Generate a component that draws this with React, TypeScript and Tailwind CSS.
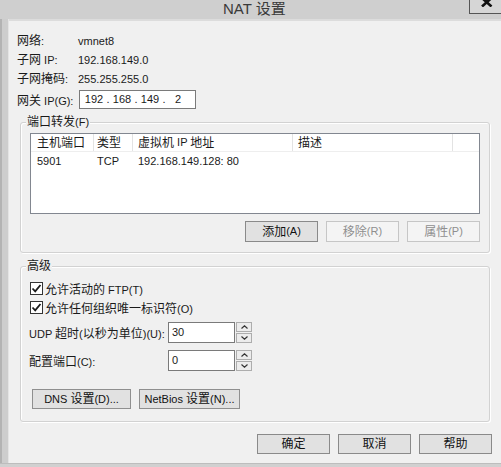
import React from "react";

const CJK_RUN = /([\u2E80-\u9FFF\uFF00-\uFFEF]+)/;
const CJK_CHAR = /[\u2E80-\u9FFF\uFF00-\uFFEF]/;

// Mixed-script text: CJK at 12px, Latin at 11px, like the system UI font pairing.
function T({ s }: { s: string }) {
  const parts = s.split(CJK_RUN).filter((p) => p.length > 0);
  return (
    <>
      {parts.map((p, i) =>
        CJK_CHAR.test(p) ? (
          <span key={i} className="text-[12px]">
            {p}
          </span>
        ) : (
          <span key={i} className="text-[11px]">
            {p}
          </span>
        )
      )}
    </>
  );
}

function Btn({
  label,
  className,
  disabled,
}: {
  label: string;
  className: string;
  disabled?: boolean;
}) {
  return (
    <div
      className={
        "flex items-center justify-center whitespace-pre leading-none " +
        (disabled
          ? "border border-[#c6c6c6] bg-[#f4f4f4] text-[#8f8f8f] "
          : "border border-[#8a8a8a] bg-[#e1e1e1] text-[#111] ") +
        className
      }
    >
      <T s={label} />
    </div>
  );
}

function GroupBox({
  title,
  className,
  children,
}: {
  title: string;
  className: string;
  children: React.ReactNode;
}) {
  return (
    <div
      className={
        "relative rounded-[3px] border border-[#d2d2d2] shadow-[inset_1px_1px_0_#ffffff,1px_1px_0_#ffffff] " +
        className
      }
    >
      <div className="absolute left-[5px] top-[-8px] bg-[#f0f0f0] px-[1px] h-[14px] flex items-center leading-none whitespace-pre">
        <T s={title} />
      </div>
      {children}
    </div>
  );
}

function CheckBox({ label }: { label: string }) {
  return (
    <div className="flex items-center h-[13px] ml-[1px]">
      <div className="w-[13px] h-[13px] border border-[#333333] bg-white flex items-center justify-center">
        <svg width="11" height="11" viewBox="0 0 11 11">
          <path d="M1.5 5.5 L4.2 8.3 L9.5 2" fill="none" stroke="#1a1a1a" strokeWidth="1.8" />
        </svg>
      </div>
      <div className="ml-[2px] leading-none whitespace-pre">
        <T s={label} />
      </div>
    </div>
  );
}

function Spin({ value }: { value: string }) {
  return (
    <div className="flex h-[21px]">
      <div className="w-[67px] h-full border border-[#7a7a7a] bg-white flex items-center pl-[3px] leading-none">
        <T s={value} />
      </div>
      <div className="w-[16px] h-full ml-[1px] flex flex-col">
        <div className="h-[10px] border border-[#adadad] bg-[#ececec] flex items-center justify-center">
          <svg width="7" height="4" viewBox="0 0 7 4">
            <path d="M0.5 3.5 L3.5 0.8 L6.5 3.5" fill="none" stroke="#333" strokeWidth="1.2" />
          </svg>
        </div>
        <div className="h-[10px] mt-[1px] border border-[#adadad] bg-[#ececec] flex items-center justify-center">
          <svg width="7" height="4" viewBox="0 0 7 4">
            <path d="M0.5 0.5 L3.5 3.2 L6.5 0.5" fill="none" stroke="#333" strokeWidth="1.2" />
          </svg>
        </div>
      </div>
    </div>
  );
}

function InfoRow({ label, value }: { label: string; value: string }) {
  return (
    <div className="flex items-center h-[19px] leading-none">
      <div className="w-[61px] whitespace-pre">
        <T s={label} />
      </div>
      <div className="whitespace-pre">
        <T s={value} />
      </div>
    </div>
  );
}

export default function App() {
  const octets = ["192", "168", "149", "2"];
  return (
    <div
      className="relative w-[501px] h-[467px] overflow-hidden bg-[#f0f0f0] text-[#1a1a1a] flex flex-col"
      style={{ fontFamily: '"Liberation Sans", "Noto Sans CJK SC", sans-serif' }}
    >
      {/* title bar */}
      <div className="h-[19px] shrink-0 bg-[#cfcfcf] flex items-start pl-[223px] pt-[1px]">
        <span className="text-[15px] leading-[16px] text-[#3a3a3a] whitespace-pre">NAT 设置</span>
      </div>
      <div className="absolute right-0 top-0 w-[32px] h-[14px] border-l border-b border-[#555555] bg-[#d6d6d6]">
        <svg className="absolute left-[11px] top-0" width="12" height="7" viewBox="0 0 12 7">
          <path d="M1 -2 L10.5 6.5 M10.5 -2 L1 6.5" stroke="#111" strokeWidth="2.6" />
        </svg>
      </div>

      <div className="flex flex-1">
        {/* left window frame */}
        <div className="w-[8px] bg-[#cdcdcd] border-l-2 border-[#b3b3b3]" />
        <div className="w-[1px] bg-[#e4e4e4]" />

        {/* client area */}
        <div className="flex-1 flex flex-col border-t-2 border-[#dcdcdc]">
          <div className="pl-[8px] pt-[9px] flex flex-col">
            <InfoRow label="网络:" value="vmnet8" />
            <InfoRow label="子网 IP:" value="192.168.149.0" />
            <InfoRow label="子网掩码:" value="255.255.255.0" />
            <div className="flex items-center h-[19px] mt-[3px] leading-none">
              <div className="w-[61px] whitespace-pre">
                <T s="网关 IP(G):" />
              </div>
              <div className="ml-[1px] w-[117px] h-[19px] border border-[#7a7a7a] bg-white flex items-center pl-[3px]">
                {octets.map((o, i) => (
                  <React.Fragment key={i}>
                    <div className="w-[22px] text-center text-[11px]">{o}</div>
                    {i < 3 && <div className="w-[6px] text-center text-[11px]">.</div>}
                  </React.Fragment>
                ))}
              </div>
            </div>
          </div>

          {/* port forwarding */}
          <GroupBox title="端口转发(F)" className="ml-[11px] mt-[13px] w-[470px] pt-[10px] pl-[9px] pb-[10px]">
            <div className="w-[450px] h-[81px] border border-[#828790] bg-white flex flex-col">
              <div className="grid grid-cols-[63px_39px_160px_160px_1fr] h-[18px] border-b border-[#eeeeee]">
                <div className="border-r border-[#e3e3e3] pl-[6px] flex items-center leading-none"><T s="主机端口" /></div>
                <div className="border-r border-[#e3e3e3] pl-[3px] flex items-center leading-none"><T s="类型" /></div>
                <div className="border-r border-[#e3e3e3] pl-[5px] flex items-center leading-none whitespace-pre"><T s="虚拟机 IP 地址" /></div>
                <div className="border-r border-[#e3e3e3] pl-[5px] flex items-center leading-none"><T s="描述" /></div>
                <div />
              </div>
              <div className="grid grid-cols-[63px_39px_160px_160px_1fr] h-[19px]">
                <div className="pl-[6px] flex items-center leading-none"><T s="5901" /></div>
                <div className="pl-[3px] flex items-center leading-none"><T s="TCP" /></div>
                <div className="pl-[5px] flex items-center leading-none whitespace-pre"><T s="192.168.149.128: 80" /></div>
                <div />
                <div />
              </div>
            </div>
            <div className="flex justify-end gap-[8px] mt-[7px] w-[450px]">
              <Btn label="添加(A)" className="w-[73px] h-[21px] bg-[#dddddd] border-[#7c7c7c]" />
              <Btn label="移除(R)" className="w-[73px] h-[21px]" disabled />
              <Btn label="属性(P)" className="w-[73px] h-[21px]" disabled />
            </div>
          </GroupBox>

          {/* advanced */}
          <GroupBox title="高级" className="ml-[11px] mt-[13px] w-[470px] pt-[15px] pl-[8px] pb-[12px]">
            <CheckBox label="允许活动的 FTP(T)" />
            <div className="mt-[6px]">
              <CheckBox label="允许任何组织唯一标识符(O)" />
            </div>
            <div className="flex items-center mt-[8px]">
              <div className="w-[139px] leading-none whitespace-pre">
                <T s="UDP 超时(以秒为单位)(U):" />
              </div>
              <Spin value="30" />
            </div>
            <div className="flex items-center mt-[7px]">
              <div className="w-[139px] leading-none whitespace-pre">
                <T s="配置端口(C):" />
              </div>
              <Spin value="0" />
            </div>
            <div className="flex gap-[8px] mt-[18px] ml-[3px]">
              <Btn label="DNS 设置(D)..." className="w-[99px] h-[20px] bg-[#dcdcdc] border-[#8f8f8f]" />
              <Btn label="NetBios 设置(N)..." className="w-[101px] h-[20px] bg-[#dcdcdc] border-[#8f8f8f]" />
            </div>
          </GroupBox>

          {/* dialog buttons */}
          <div className="flex justify-end gap-[8px] mt-[12px] pr-[9px]">
            <Btn label="确定" className="w-[73px] h-[20px]" />
            <Btn label="取消" className="w-[73px] h-[20px]" />
            <Btn label="帮助" className="w-[73px] h-[20px]" />
          </div>
        </div>
      </div>

      {/* bottom window frame */}
      <div className="h-[4px] shrink-0 bg-[#d0d0d0] border-t border-[#bdbdbd]" />
    </div>
  );
}
